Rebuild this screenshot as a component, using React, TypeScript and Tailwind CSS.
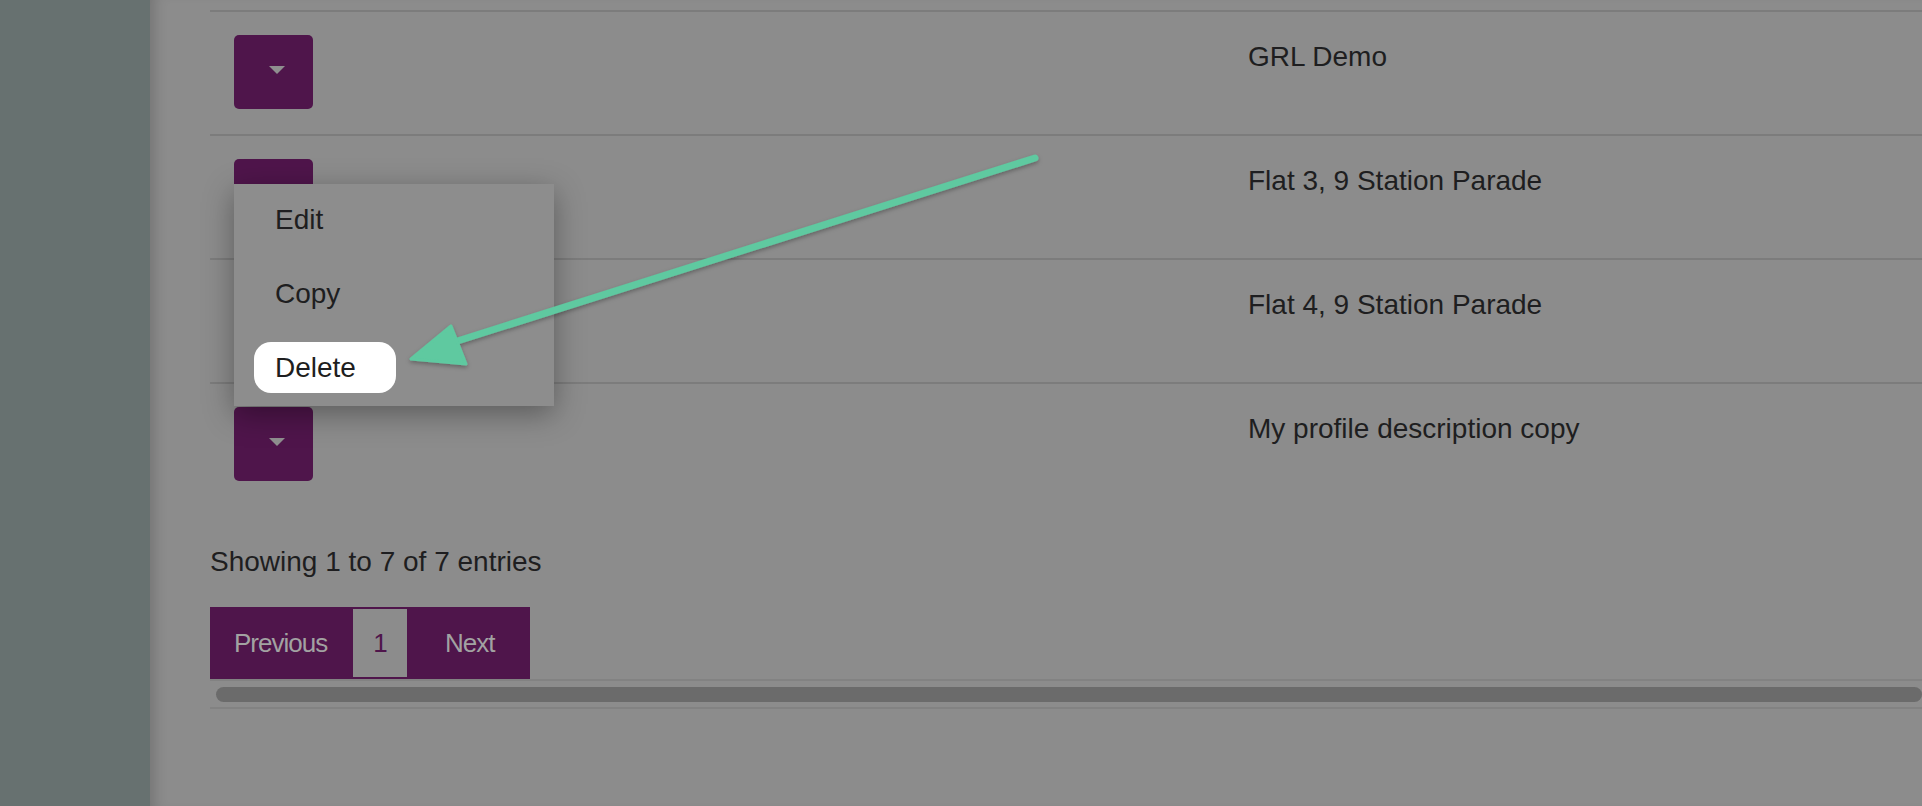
import React from 'react';

const rows = ['GRL Demo', 'Flat 3, 9 Station Parade', 'Flat 4, 9 Station Parade', 'My profile description copy'];

function Caret() {
  return (
    <svg width="16" height="8" viewBox="0 0 16 8" className="ml-[7px] -mt-[5px]">
      <polygon points="0,0 16,0 8,8" fill="#8f8f8f" />
    </svg>
  );
}

export default function App() {
  return (
    <div className="relative flex h-[806px] w-[1922px] overflow-hidden bg-[#8c8c8c] font-['Liberation_Sans',Arial,sans-serif] text-[#1e1e20]">
      <aside className="w-[150px] shrink-0 bg-[#677170]" />

      <main className="flex-1 pl-[60px] pt-[10px] shadow-[inset_14px_0_14px_-10px_rgba(0,0,0,0.18)]">
        <div className="border-t-2 border-[#7c7c7c]">
          {rows.map((name, i) => (
            <div
              key={name}
              className={`flex h-[124px] ${i < rows.length - 1 ? 'border-b-2 border-[#7c7c7c]' : 'h-[122px]'}`}
            >
              <div className="w-[1038px] shrink-0 pl-[24px] pt-[23px]">
                <button className="flex h-[74px] w-[79px] items-center justify-center rounded-[5px] bg-[#4f154b]">
                  <Caret />
                </button>
              </div>
              <div className="pt-[30px] text-[28px] leading-[30px]">{name}</div>
            </div>
          ))}
        </div>

        <p className="mt-[38px] text-[28px] leading-[32px]">Showing 1 to 7 of 7 entries</p>

        <nav className="mt-[29px] flex h-[72px] w-[320px] items-center bg-[#4f154b] text-[26px] tracking-[-1px] text-[#a2a2a2]">
          <span className="w-[143px] pl-[24px]">Previous</span>
          <span className="flex h-[68px] w-[54px] items-center justify-center bg-[#8c8c8c] text-[#4f154b]">1</span>
          <span className="pl-[38px]">Next</span>
        </nav>

        <div className="border-y-2 border-[#828282] pb-[5px] pl-[6px] pt-[6px]">
          <div className="h-[15px] rounded-full bg-[#6b6b6b]" />
        </div>
      </main>

      <div className="absolute left-[234px] top-[184px] flex h-[222px] w-[320px] flex-col gap-[23px] bg-[#8d8d8d] pt-[10px] text-[28px] shadow-[0_8px_28px_rgba(0,0,0,0.35)]">
        {['Edit', 'Copy', 'Delete'].map((item) => (
          <div
            key={item}
            className={`ml-[20px] flex h-[51px] w-[142px] items-center rounded-[17px] pl-[21px] ${item === 'Delete' ? 'bg-white' : ''}`}
          >
            {item}
          </div>
        ))}
      </div>

      <svg className="pointer-events-none absolute left-0 top-0" width="1922" height="806">
        <defs>
          <filter id="arrowShadow" x="-10%" y="-10%" width="120%" height="130%">
            <feDropShadow dx="0" dy="2" stdDeviation="2" floodColor="#000" floodOpacity="0.3" />
          </filter>
        </defs>
        <g filter="url(#arrowShadow)" fill="#5ec9a0" stroke="#5ec9a0" strokeLinecap="round" strokeLinejoin="round">
          <line x1="1035" y1="158" x2="448" y2="344" strokeWidth="7" />
          <polygon points="451,326 411,359 466,364" strokeWidth="3" />
        </g>
      </svg>
    </div>
  );
}
